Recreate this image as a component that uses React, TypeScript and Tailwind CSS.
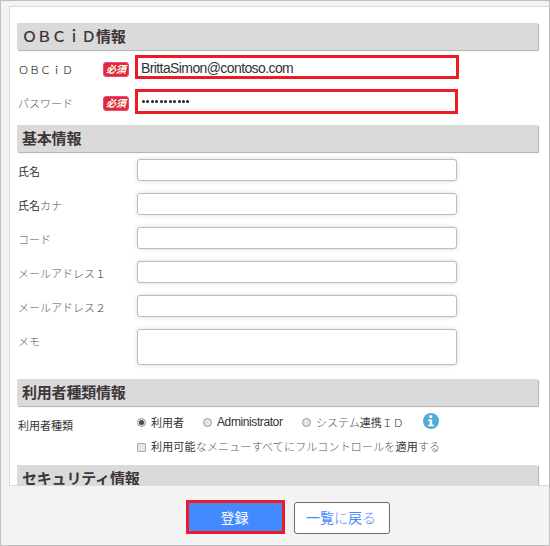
import type { ReactNode } from "react";

const CJK = "font-['Noto_Sans_CJK_JP',sans-serif]";

/** Lighter kana that sit between darker kanji. */
function Kana({ children }: { children: ReactNode }) {
  return <span className="font-light text-[#555]">{children}</span>;
}

function SectionTitle({ children }: { children: ReactNode }) {
  return (
    <h2
      className={`${CJK} flex h-[27px] w-[521px] shrink-0 items-center rounded-[1px] bg-[#dadada] pb-[2px] pl-[5px] text-[15px] leading-none font-bold tracking-[-0.2px] whitespace-nowrap text-[#3e3538] shadow-[1px_1px_1px_#b0b0b0]`}
    >
      {children}
    </h2>
  );
}

function Required() {
  return (
    <span
      className={`${CJK} mt-3 flex h-[15px] w-[26px] shrink-0 items-center justify-center rounded-[3px] border border-[#f0458c] bg-[#dd2c30] pb-px text-[10px] leading-none font-bold text-white italic`}
    >
      必須
    </span>
  );
}

function Field({
  label,
  required = false,
  children,
}: {
  label: ReactNode;
  required?: boolean;
  children: ReactNode;
}) {
  return (
    <div className="flex h-[34px] items-start">
      <div
        className={`${CJK} ${required ? "pt-3" : "pt-[10px]"} w-[86px] shrink-0 pl-px text-[11px] leading-[14px] whitespace-nowrap text-[#333]`}
      >
        {label}
      </div>
      <div className="w-8 shrink-0">{required && <Required />}</div>
      {children}
    </div>
  );
}

function TextBox({ tall = false }: { tall?: boolean }) {
  return (
    <div
      className={`${tall ? "h-9" : "h-[22px]"} mt-[5px] ml-[2px] w-80 shrink-0 rounded-[3px] border border-[#bdbdbd] bg-white shadow-[0_0_4px_#d8d8d8]`}
    />
  );
}

function Radio({ checked = false }: { checked?: boolean }) {
  return (
    <span className="flex size-[9px] shrink-0 items-center justify-center rounded-full border border-[#999] bg-[#e4e4e4]">
      {checked && <span className="size-[5px] rounded-full bg-[#4a4a4a]" />}
    </span>
  );
}

export default function App() {
  return (
    <div className="flex h-[546px] w-[550px] flex-col overflow-hidden border border-[#bfbfbf] bg-[#f3f3f3] pt-[5px] pl-2">
      <main className="flex h-[480px] shrink-0 flex-col overflow-hidden border-t border-b border-l border-[#d9d9d9] bg-white pt-4 pl-[7px]">
        <SectionTitle>
          <span className="font-medium">ＯＢＣｉＤ</span>情報
        </SectionTitle>
        <section className="h-[75px] shrink-0">
          <Field label={<span className="font-light text-black">ＯＢＣｉＤ</span>} required>
            <div className="mt-[5px] flex h-6 w-[324px] items-center border-[3px] border-[#ed1c24] bg-white pt-px pl-[3px] font-['Liberation_Sans',Arial,sans-serif] text-[14px] leading-none tracking-[-0.6px] text-[#333]">
              BrittaSimon@contoso.com
            </div>
          </Field>
          <Field label={<Kana>パスワード</Kana>} required>
            <div className="mt-[5px] flex h-[25px] w-[323px] items-center gap-[1.45px] border-[3px] border-[#ed1c24] bg-white pl-1">
              {Array.from({ length: 11 }, (_, i) => (
                <span key={i} className="size-[3px] rounded-full bg-[#222]" />
              ))}
            </div>
          </Field>
        </section>

        <SectionTitle>基本情報</SectionTitle>
        <section className="h-[227px] shrink-0 pt-[2px]">
          <Field label="氏名"><TextBox /></Field>
          <Field label={<>氏名<Kana>カナ</Kana></>}><TextBox /></Field>
          <Field label={<Kana>コード</Kana>}><TextBox /></Field>
          <Field label={<><Kana>メールアドレス</Kana><span className="font-light">１</span></>}><TextBox /></Field>
          <Field label={<><Kana>メールアドレス</Kana><span className="font-light">２</span></>}><TextBox /></Field>
          <Field label={<Kana>メモ</Kana>}><TextBox tall /></Field>
        </section>

        <SectionTitle>利用者種類情報</SectionTitle>
        <section className={`${CJK} flex h-[59px] shrink-0 text-[11px] leading-[14px] whitespace-nowrap text-[#333]`}>
          <div className="w-[120px] shrink-0 pt-3 pl-px">利用者種類</div>
          <div>
            <div className="flex h-8 items-center">
              <div className="flex w-[66px] items-center gap-[5px]"><Radio checked /><span className="-mt-px">利用者</span></div>
              <div className="flex w-[99px] items-center gap-[5px]">
                <Radio />
                <span className="font-['Liberation_Sans',Arial,sans-serif] text-[12px] tracking-[-0.4px]">Administrator</span>
              </div>
              <div className="flex w-[121px] items-center gap-[5px]">
                <Radio /><span className="-mt-px"><Kana>システム</Kana>連携<span className="font-light">ＩＤ</span></span>
              </div>
              <svg width="16" height="16" viewBox="0 0 16 16" className="mb-[2px] shrink-0">
                <circle cx="8" cy="8" r="8" fill="#4fadd6" />
                <circle cx="7.8" cy="3.6" r="1.6" fill="white" />
                <path d="M5 6.5h4.2v5.2h1.8v1.5H5v-1.5h1.7V8H5z" fill="white" />
              </svg>
            </div>
            <div className="flex h-[18px] items-center gap-[5px]">
              <span className="size-[9px] shrink-0 rounded-[1px] border border-[#aaa] bg-[#e6e6e6]" />
              <span className="-mt-[2px] tracking-[0.18px]">
                利用可能<Kana>なメニューすべてにフルコントロールを</Kana>適用<Kana>する</Kana>
              </span>
            </div>
          </div>
        </section>

        <SectionTitle>セキュリティ情報</SectionTitle>
      </main>

      <footer className={`${CJK} flex items-start gap-[9px] pt-[14px] pl-[177px] text-sm leading-none`}>
        <button className="flex h-[34px] w-[99px] items-center justify-center border-[3px] border-[#ed1c24] bg-[#448aff] pr-[2px] font-normal text-white">
          登録
        </button>
        <button className="mt-[2px] flex h-8 w-24 items-center justify-center rounded-[3px] border border-[#6b6b6b] bg-white pr-[2px] pb-[2px] whitespace-nowrap text-[#448aff]">
          一覧<span className="font-light text-[#6585ff]">に</span>戻<span className="font-light text-[#6585ff]">る</span>
        </button>
      </footer>
    </div>
  );
}
